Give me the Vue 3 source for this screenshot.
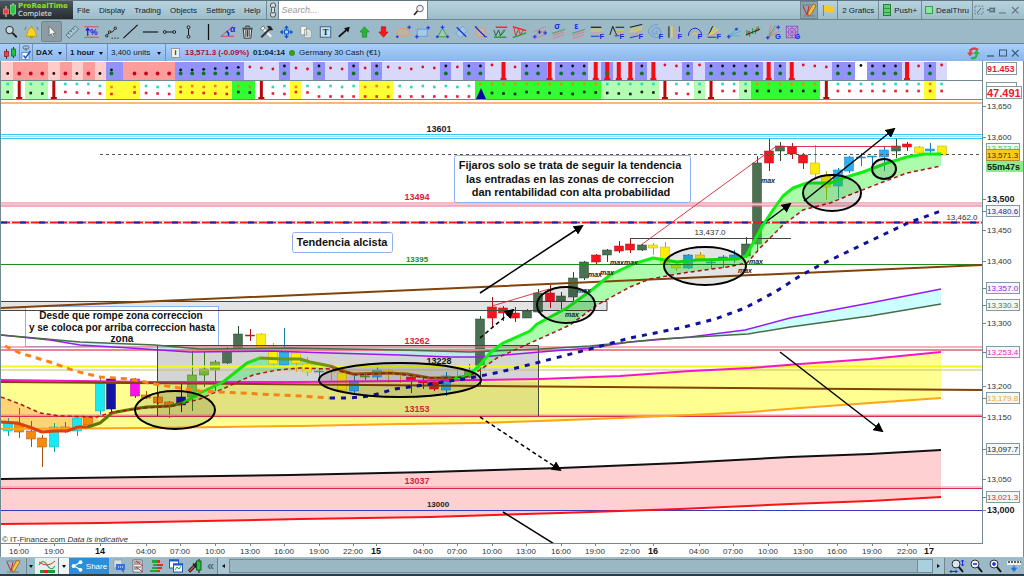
<script setup>
import { ref } from 'vue'

const STEP = 11.53
const cx = (i) => 7.7 + STEP * i
const pts = (list) => list.map((p) => p.join(',')).join(' ')

const query = ref('')
const menus = ['File', 'Display', 'Trading', 'Objects', 'Settings', 'Help']

const tools = [
  ['Zoom', '<circle cx="8" cy="8" r="3.8" fill="#c9dce4" stroke="#333" stroke-width="1.2"/><path d="M11 11l4.500 4.500" stroke="#222" stroke-width="2"/>'],
  ['Alert', '<path d="M4 14.500c2-2 1.500-7.500 5.500-9V4h1v1.500C14.500 7 14 12.500 16 14.500z" fill="#fbd51c" stroke="#b98a00" stroke-width=".7"/><circle cx="10" cy="15.500" r="1.400" fill="#c79208"/><path d="M4.500 4.500Q3 6 3.200 8M15.500 4.500Q17 6 16.800 8" fill="none" stroke="#555" stroke-width=".7"/>'],
  ['Select', '<path d="M7.500 4v10l2.300-2.200 1.600 4 1.700-.8-1.700-3.700h3z" fill="#fff" stroke="#566" stroke-width=".8"/>'],
  ['Ruler', '<path d="M3 13L13 3.500l3.500 3.500L6.500 16.500z" fill="#a7c5d2" stroke="#557682"/><path d="M5.500 11l1.500 1.500M8 8.700l1.500 1.500M10.500 6.300l1.500 1.500" stroke="#345"/>'],
  ['Variation', '<path d="M2.500 4.500h15M2.500 15.500h15" stroke="#e24b55" stroke-width="1.200"/><path d="M6 14V7M4 8.500l2-2.500 2 2.500" stroke="#1828e0" stroke-width="1.400" fill="none"/><text x="8.500" y="13.500" font-size="9" font-weight="700" fill="#1828e0">%</text>'],
  ['Polyline', '<path d="M5 14l3-4h3l3-4" stroke="#222" fill="none"/><g fill="#9bbac7" stroke="#222"><circle cx="5" cy="14" r="1.300"/><circle cx="8" cy="10" r="1.300"/><circle cx="14" cy="6" r="1.300"/></g><path d="M10 16.500h8" stroke="#222" stroke-dasharray="1.500 1.500"/>'],
  ['Segment', '<path d="M2.500 16.500L17.500 2.500" stroke="#111" stroke-width="1.200"/>'],
  ['Horizontal line', '<path d="M2 10h16" stroke="#111" stroke-width="1.200"/>'],
  ['Horizontal segment', '<path d="M6 10h8" stroke="#111"/><g fill="#b9d0da" stroke="#111"><circle cx="5" cy="10" r="1.500"/><circle cx="15" cy="10" r="1.500"/></g>'],
  ['Vertical segment', '<path d="M10 6v8" stroke="#111"/><g fill="#b9d0da" stroke="#111"><circle cx="10" cy="5" r="1.500"/><circle cx="10" cy="15" r="1.500"/></g>'],
  ['Vertical line', '<path d="M10 1.500v17" stroke="#111" stroke-width="1.300"/>'],
  ['Angle', '<path d="M16 4L3 14.500h14" stroke="#e0404c" fill="none"/><path d="M9 9q3 2 2 5" stroke="#1828e0" fill="none" stroke-width="1.500"/><text x="12.500" y="10" font-size="9" font-weight="700" fill="#1828e0">α</text>'],
  ['Delete', '<path d="M5.500 7h9l-1 9.500h-7z" fill="#ddd" stroke="#333"/><path d="M4.500 6h11M8 5V3.800h4V5M8.300 8v7M10 8v7M11.700 8v7" stroke="#333" fill="none"/>'],
  ['Tools', '<path d="M6 6l9 9" stroke="#eee" stroke-width="2.600"/><path d="M14 6L4.500 15.500" stroke="#333" stroke-width="2.200"/><path d="M10.500 3.500l4 .500 2.500 4-3.500.500z" fill="#222"/><path d="M3.500 6.500l3-3 2 2.500-2.500 2.500z" fill="#eee" stroke="#444" stroke-width=".7"/>'],
  ['Move', '<path d="M10 4v12M4 10h12" stroke="#1255c8" stroke-width="1.200"/><path d="M10 3l-2.500 3h5zM10 17l-2.500-3h5zM3 10l3-2.500v5zM17 10l-3-2.500v5z" fill="#1255c8"/><rect x="8" y="8" width="4" height="4" fill="#bcdff5" stroke="#1255c8"/>'],
  ['Copy', '<path d="M5 4h6v9H5zM9 7h4.500l2.500 2.500V16H9z" fill="#f4f4f0" stroke="#8a9499" stroke-width=".8"/><path d="M10.500 10h4M10.500 12h4M10.500 14h4" stroke="#999" stroke-width=".6"/>'],
  ['Text', '<rect x="4.500" y="4.500" width="11" height="11" fill="#c9e2ee" stroke="#406080"/><text x="7" y="13.500" font-size="9" font-weight="700" fill="#10204a" font-family="Liberation Serif">T</text>'],
  ['Arrow', '<path d="M4 15l9-8" stroke="#111" stroke-width="1.800"/><path d="M15.500 4.500l-1.500 6-4.500-4.500z" fill="#111"/>'],
  ['Up arrow', '<path d="M10 4.500l4.800 5.500h-2.500v5.500H7.700V10H5.200z" fill="#25b532" stroke="#128020" stroke-width=".6"/>'],
  ['Down arrow', '<path d="M10 15.500l4.800-5.500h-2.500V4.500H7.700V10H5.200z" fill="#f81616" stroke="#b00" stroke-width=".6"/>'],
  ['Ellipse', '<ellipse cx="9.500" cy="10.500" rx="6.500" ry="4" fill="#b7b5ae" stroke="#ee9a66" stroke-width="1.200"/><path d="M14 5h4M16 3v4M2 15h3M3.500 13.500v3" stroke="#1828e0"/>'],
  ['Rectangle', '<rect x="4.500" y="7" width="10.500" height="7.500" fill="#a6cbe3" stroke="#669be8"/><path d="M14 5.500h4M16 3.500v4M2 15h4M4 13v4" stroke="#1828e0"/>'],
  ['Triangle', '<path d="M10 6L5 15h10z" fill="#9fcaba" stroke="#3da04c"/><path d="M8 5h4M10 3v4M3 15h3M4.500 13.500v3M14 15h3M15.500 13.500v3" stroke="#1828e0"/>'],
  ['Parallelogram', '<path d="M11 4l5 4.500-7 7.500-5-4.500z" fill="#a6c7de" stroke="#72a3ea"/><path d="M5 5l10 10" stroke="#1828e0" stroke-width="1.200"/>'],
  ['Circle', '<circle cx="10" cy="10" r="5" fill="#b6b9b4" stroke="#ee9a66" stroke-width="1.200"/><path d="M5 5l10 10" stroke="#1828e0" stroke-width="1.200"/><path d="M4 4.500h2M14 15h3" stroke="#1828e0"/>'],
  ['Double top', '<path d="M5 5h12" stroke="#f22" stroke-width="1.500"/><path d="M3 15.500h13" stroke="#16a52a" stroke-width="1.500"/><path d="M3 8l2 6 3-6 2 6 5-6" stroke="#333" fill="none" stroke-width=".8"/><path d="M9 14l5-7" stroke="#16a52a"/>'],
  ['Wedge', '<path d="M3 4.500l14 4" stroke="#f22" stroke-width="1.500"/><path d="M3 16l14-5" stroke="#16a52a" stroke-width="1.500"/><path d="M4 5l2 9 3-7 2 6 3-5" stroke="#d33" fill="none"/>'],
  ['Pitchfork', '<path d="M3 10L17 4M4 14l13-6M5 17l12-5" stroke="#db7c85" stroke-width=".9"/><path d="M3 15h4M5 13v4M8 10h4M10 8v4M14 11h4M16 9v4" stroke="#1828e0"/>'],
  ['Standard deviation', '<path d="M4 12l12-4M4 14l12-4M4 17l12-4" stroke="#e47782" stroke-width=".9"/><path d="M3 11.500L17 7" stroke="#43ad5c"/><text x="5.500" y="7" font-size="9" font-weight="700" fill="#1828e0">σ</text>'],
  ['Standard error', '<path d="M4 12l12-4M4 14l12-4M4 17l12-4" stroke="#e47782" stroke-width=".9"/><path d="M3 11.500L17 7" stroke="#43ad5c"/><text x="5.500" y="7" font-size="9" font-weight="700" fill="#1828e0">ε</text>'],
  ['Fibonacci retracement', '<path d="M3 5h11" stroke="#111" stroke-width="1.200"/><path d="M3 7h11M3 9h11" stroke="#d7cd56"/><path d="M3 11h11" stroke="#e09a8c"/><path d="M3 14.500h9" stroke="#1828e0"/><text x="12" y="17" font-size="8" font-weight="700" fill="#1828e0">F</text>'],
  ['Fibonacci extension', '<path d="M2 13l3-9 4 9" stroke="#111" fill="none"/><path d="M8 5h9" stroke="#111"/><path d="M8 8h9" stroke="#d7cd56"/><path d="M8 10.500h9" stroke="#e09a8c"/><path d="M7 14h5" stroke="#1828e0"/><text x="12" y="17" font-size="8" font-weight="700" fill="#1828e0">F</text>'],
  ['Fibonacci channel', '<path d="M3 5l13-3" stroke="#111"/><path d="M3 8l13-3M3 10l13-3" stroke="#d7cd56" stroke-width="1.500"/><path d="M3 13l13-3" stroke="#e09a8c"/><path d="M3 16l9-2" stroke="#1828e0"/><text x="12" y="17" font-size="8" font-weight="700" fill="#1828e0">F</text>'],
  ['Fibonacci spiral', '<path d="M9 10q1-2 2 0t-3 2-2-4 6-2 2 7-9 1-1-9 8-2" stroke="#5896e0" fill="none" stroke-width=".9"/><text x="12" y="17" font-size="8" font-weight="700" fill="#1828e0">F</text>'],
  ['Fibonacci time zones', '<path d="M3 4v12" stroke="#444" stroke-width="1.500"/><path d="M6 4v12" stroke="#ddd056" stroke-width="2"/><path d="M10 4v12" stroke="#d4a29a" stroke-width="2"/><path d="M14 4v6" stroke="#1828e0"/><text x="12" y="17" font-size="8" font-weight="700" fill="#1828e0">F</text>'],
  ['Fibonacci arcs', '<path d="M2.500 14a7 8 0 0 1 14 0" stroke="#1828e0" fill="none"/><path d="M5 14a4.500 5 0 0 1 9 0" stroke="#e3a06a" fill="none"/><path d="M7 14a2.500 3 0 0 1 5 0" stroke="#ddd056" fill="none"/><text x="12" y="17" font-size="8" font-weight="700" fill="#1828e0">F</text>'],
  ['Fibonacci fan', '<path d="M3 15L8 4" stroke="#111"/><path d="M3 15l8-10M3 15l11-8" stroke="#ddd056" stroke-width="1.500"/><path d="M3 15l12-5" stroke="#e09a8c"/><path d="M3 15.500h9" stroke="#1828e0"/><text x="12" y="17" font-size="8" font-weight="700" fill="#1828e0">F</text>'],
  ['Speed lines', '<path d="M4 14l10-9M4 14l13-5M4 14h12" stroke="#5ba9ea"/><path d="M2 15h4M4 13v4" stroke="#1828e0"/><circle cx="12" cy="7" r="1.500" fill="#1255c8"/>'],
  ['Regression', '<path d="M3 14V8M6 15V9M9 12V6M12 12V7M15 9V4" stroke="#2da043" stroke-width="1.300"/><path d="M4.500 13V9M13.500 10V5" stroke="#d33"/><path d="M2 13l15-6" stroke="#222"/>'],
  ['Gann fan', '<path d="M5 15L7 3M5 15l9-10M5 15l12-6" stroke="#dc7893"/><path d="M5 15l7-12" stroke="#43ad5c"/><path d="M2 16h4M4 14v4M13 5h4M15 3v4" stroke="#1828e0"/><text x="11.500" y="17" font-size="8" font-weight="700" fill="#1828e0">G</text>'],
  ['Gann square', '<rect x="3.500" y="4" width="12" height="12" fill="#c6a9df" stroke="#8c4ec5"/><path d="M3.500 4l12 12M15.500 4l-12 12M9.500 4v12M3.500 10h12" stroke="#8c4ec5" stroke-width=".7"/><circle cx="9.500" cy="10" r="4" fill="none" stroke="#8c4ec5"/><text x="12" y="17" font-size="8" font-weight="700" fill="#1828e0">G</text>']
]

/* indicator strips: [colour, right edge] */
const C = { l: '#ffcccc', p: '#fb9d9d', b: '#9292fa', v: '#d8d8fb', w: '#ffffff', g: '#b4fbb4', G: '#33fb33', y: '#ffff33' }
const runs = (list) => {
  let x = 1
  return list.map(([c, end]) => {
    const r = { x, w: end - x, fill: C[c], c, end }
    x = end
    return r
  })
}
const bandA = runs([
  ['l', 13], ['p', 48], ['l', 60], ['p', 72], ['l', 83], ['p', 95], ['l', 106], ['b', 123], ['p', 175], ['b', 244], ['v', 279], ['b', 290],
  ['v', 313], ['b', 325], ['v', 348], ['b', 359], ['v', 371], ['b', 382], ['v', 440], ['b', 451], ['v', 463], ['b', 485], ['v', 521],
  ['b', 547], ['v', 555], ['b', 588], ['v', 601], ['b', 613], ['v', 635], ['b', 647], ['v', 682], ['b', 693], ['v', 705], ['b', 763],
  ['v', 774], ['b', 786], ['v', 832], ['b', 855], ['w', 867], ['b', 902], ['v', 924], ['b', 936], ['v', 947]
])
const bandB = runs([
  ['g', 13], ['w', 25], ['g', 48], ['w', 106], ['y', 140], ['w', 175], ['y', 232], ['G', 255], ['w', 290], ['y', 301], ['w', 359], ['y', 393],
  ['w', 475], ['G', 601], ['g', 659], ['w', 694], ['g', 705], ['w', 739], ['g', 751], ['G', 820], ['w', 924], ['y', 936], ['w', 947]
])
const flagsA = [43, 47, 51, 52, 53, 54, 56, 66, 68, 78]
const flagsB = [1, 4, 22, 57, 61, 71]
const at = (band, x) => (band.find((r) => x < r.end) || {}).c
const dotsA = []
const dotsB = []
for (let i = 0; i < 82; i++) {
  if (i === 10) continue
  const x = cx(i)
  const a = at(bandA, x)
  if (a === 'b') {
    const y = i < 16 ? 70 : i < 22 ? 70 - (i - 16) / 1.5 : 66
    dotsA.push({ x, y, c: '#111122', r: 1.4 }, { x, y: 73.4, c: '#087818', r: 1.9 })
  } else if (a === 'w') dotsA.push({ x, y: 65.5, c: '#111', r: 1.4 })
  else if (a === 'l') dotsA.push({ x, y: 73.5, c: '#111', r: 1.4 })
  else if (a === 'p') dotsA.push({ x, y: 73.5, c: '#c80018', r: 1.9 })
  else if (!flagsA.includes(i)) dotsA.push({ x, y: i > 40 ? 65 + (i % 3) : 67 + (i % 3), c: '#d8142c', r: 1.4 })
  const b = at(bandB, x)
  if (!flagsB.includes(i)) {
    dotsB.push({ x, y: i < 8 || i > 40 ? 84 : 86 + (i % 2), c: 'yG'.includes(b) ? '#f28020' : '#28d8c4' })
    dotsB.push({ x, y: i > 26 && i < 42 ? 96.500 : i > 60 ? 91 : 92 + (i % 5) / 2, c: 'gG'.includes(b) ? '#102810' : '#f01c2c' })
  }
}

/* candles: index, colour, body top, body bottom, wick top, wick bottom */
const K = { c: '#18eaf4', o: '#f58a0c', n: '#1414a4', m: '#ff10f0', e: '#7ab53c', d: '#4c7152', y: '#fbee08', s: '#2bb0f2', r: '#fa1420' }
const W = { c: '#10a0a8', o: '#a85010', n: '#101070', m: '#b000a0', e: '#3f7a22', d: '#2a4a30', y: '#c8a800', s: '#187ab8', r: '#b01018' }
const candles = [
  [0, 'c', 423, 431, 418, 436], [1, 'o', 424, 432, 408, 438], [2, 'o', 431, 439, 421, 447], [3, 'o', 438, 447, 435, 467], [4, 'c', 427, 447, 423, 452],
  [5, 'o', 427, 430, 422, 433], [6, 'c', 418, 431, 417, 436], [7, 'o', 417, 425, 416, 427], [8, 'c', 383, 411, 377, 415], [9, 'n', 379, 409, 378, 413],
  [11, 'm', 379, 396, 378, 398], [12, 'o', 395, 398, 391, 399], [13, 'o', 397, 403, 393, 404], [14, 'o', 402, 406, 401, 418], [15, 'n', 397, 405, 384, 412],
  [16, 'e', 375, 397, 348, 411], [17, 'e', 369, 375, 352, 387], [18, 'e', 362, 370, 360, 391], [19, 'd', 350, 363, 347, 364], [20, 'd', 334, 350, 326, 351],
  [21, 'r', 335, 336, 329, 341], [22, 'y', 334, 347, 333, 350], [23, 'y', 347, 364, 343, 367], [24, 's', 352, 365, 328, 366], [25, 'y', 353, 363, 348, 372],
  [26, 'y', 364, 372, 357, 376], [27, 's', 371, 372, 368, 377], [28, 'y', 371, 372, 370, 382], [29, 'y', 373, 390, 372, 391], [30, 's', 381, 391, 376, 393],
  [31, 'e', 376, 377, 373, 380], [32, 's', 370, 377, 366, 380], [33, 'y', 370, 374, 369, 383], [34, 'y', 374, 375, 373, 383], [35, 'r', 377, 381, 377, 393],
  [36, 'r', 381, 383, 377, 389], [37, 'r', 382, 389, 381, 391], [38, 's', 376, 390, 372, 396], [39, 'y', 377, 378, 369, 380], [40, 'e', 370, 377, 364, 378],
  [41, 'd', 319, 368, 316, 387], [42, 'r', 307, 318, 297, 327], [43, 'r', 308, 313, 306, 321], [44, 'r', 313, 318, 307, 322], [45, 'd', 311, 318, 309, 318],
  [46, 'd', 293, 312, 289, 313], [47, 'r', 293, 301, 285, 308], [48, 'd', 296, 301, 292, 309], [49, 'd', 278, 297, 272, 304], [50, 'd', 262, 278, 261, 280],
  [51, 'r', 255, 262, 254, 264], [52, 'd', 250, 255, 249, 262], [53, 'r', 246, 251, 241, 253], [54, 'r', 244, 250, 238, 253], [55, 'd', 245, 250, 244, 251],
  [56, 'y', 245, 248, 243, 255], [57, 'y', 247, 264, 242, 265], [58, 'y', 265, 268, 263, 271], [59, 's', 255, 268, 254, 269], [60, 'y', 255, 259, 252, 260],
  [61, 's', 262, 263, 260, 269], [62, 's', 257, 258, 255, 268], [63, 's', 255, 259, 250, 263], [64, 'd', 244, 256, 237, 258], [65, 'd', 163, 244, 156, 252],
  [66, 'r', 151, 163, 138, 171], [67, 'd', 146, 151, 142, 161], [68, 'r', 147, 154, 143, 159], [69, 'r', 155, 163, 153, 169], [70, 'y', 163, 174, 145, 177],
  [71, 'y', 176, 187, 171, 200], [72, 's', 170, 186, 168, 198], [73, 's', 157, 171, 156, 173], [74, 's', 157, 158, 153, 166], [75, 's', 156, 157, 156, 165],
  [76, 's', 150, 157, 147, 171], [77, 'd', 146, 151, 139, 158], [78, 'r', 144, 147, 142, 151], [79, 'y', 147, 153, 146, 154], [80, 's', 149, 151, 143, 154], [81, 'y', 146, 155, 146, 155]
].map(([i, k, t, b, wt, wb]) => ({ x: Math.round(cx(i)), t, h: b - t, wt, wb, fill: K[k], line: W[k] }))

const fast = [[1, 422], [17, 423], [32, 428], [42, 432], [55, 431], [67, 431], [78, 427], [88, 427], [100, 423], [112, 413], [122, 411], [133, 409], [147, 407],
  [170, 406], [183, 403], [200, 393], [223, 382], [247, 363], [260, 358], [283, 359], [300, 359], [310, 362], [330, 366], [340, 370], [353, 374], [390, 373],
  [407, 374], [430, 378], [453, 378], [467, 376], [477, 368], [490, 353], [503, 343], [530, 331], [537, 324], [567, 308], [593, 289], [610, 275], [633, 264],
  [653, 258], [677, 262], [697, 260], [737, 259], [746, 256], [763, 225], [773, 210], [783, 196], [793, 188], [807, 183], [830, 183], [843, 178], [863, 172],
  [887, 163], [907, 157], [925, 154], [941, 154]]
const slow = [[1, 397], [20, 404], [40, 413], [60, 416], [97, 417], [113, 412], [143, 408], [173, 406], [200, 399], [227, 387], [253, 375], [277, 370], [300, 368],
  [330, 369], [357, 375], [390, 373], [430, 378], [467, 377], [480, 370], [497, 358], [537, 340], [570, 325], [597, 305], [630, 287], [650, 279], [683, 273],
  [727, 267], [747, 263], [760, 248], [783, 225], [803, 210], [830, 203], [857, 192], [883, 182], [907, 173], [941, 166]]
const between = (a, b, from, to) => {
  const inside = (l) => l.filter(([x]) => x >= from && x <= to)
  return pts([...inside(a), ...inside(b).reverse()])
}
const part = (l, from, to) => pts(l.filter(([x]) => x >= from && x <= to))
const fastParts = [
  ['#dc4010', part(fast, 1, 88)], ['#5f7800', part(fast, 88, 183)], ['#1ede0c', part(fast, 183, 260)], ['#6f9610', part(fast, 260, 330)],
  ['#9c6410', part(fast, 330, 453)], ['#10f010', part(fast, 453, 941)]
]
const purple = [[1, 335], [50, 340], [80, 345], [130, 348], [190, 352], [270, 351], [330, 353], [400, 355], [450, 357], [480, 357], [540, 352], [590, 348], [630, 342], [690, 337], [745, 330], [790, 318], [870, 303], [941, 289]]
const forest = [[1, 335], [80, 342], [155, 345], [200, 349], [290, 348], [400, 350], [470, 352], [540, 349], [590, 346], [660, 339], [748, 334], [790, 327], [870, 316], [941, 304]]
const magenta = [[1, 380], [80, 381], [150, 382], [300, 382], [400, 381], [480, 380], [540, 379], [620, 376], [690, 371], [750, 368], [800, 364], [870, 359], [941, 352]]
const amber = [[1, 429], [150, 428], [300, 426], [400, 424], [480, 423], [540, 421], [620, 418], [690, 415], [750, 412], [800, 408], [870, 403], [941, 398]]
const upper = [[1, 479], [145, 477], [290, 475], [430, 472], [560, 468], [680, 463], [790, 457], [870, 454], [941, 450]]
const lower = [[1, 524], [100, 523], [300, 519], [430, 517], [560, 513], [680, 509], [790, 504], [870, 501], [941, 497]]
const navy = [[330, 398], [350, 398], [370, 396], [395, 389], [430, 384], [470, 378], [500, 372], [540, 362], [590, 349], [630, 338], [680, 328], [715, 319], [745, 308], [775, 292], [800, 276], [822, 264], [870, 241], [910, 222], [941, 211]]
const orange = [[5, 346], [20, 353], [50, 362], [75, 371], [100, 377], [130, 379], [160, 385], [200, 391], [240, 393], [300, 396], [330, 398]]

const levels = [
  [103, '#ffb67a', 2], [134.5, '#38c8f8', 1], [136.5, '#a0e8ff', 1], [138.5, '#38c8f8', 1], [203, '#e0708c', 1], [204.5, '#ffc4d0', 2], [206, '#e0708c', 1],
  [264.5, '#1c8c1c', 1], [347, '#ea6478', 1], [350, '#ea8490', 2], [366.5, '#f4f420', 2], [370, '#c8c060', 1],
  [415.5, '#f0909c', 2], [416.500, '#d8304c', 1], [487, '#f0909c', 1], [488.500, '#dc2850', 1], [510.500, '#3838c0', 1]
]
const ellipses = [[175, 410, 40, 19], [400, 380, 81, 17], [566, 305, 29, 18], [705, 266, 41, 19], [832, 193, 29, 18], [884, 169, 12, 10]]
const arrows = [[480, 293, 582, 226], [767, 221, 790, 204], [804, 201, 894, 129], [780, 352, 882, 431], [503, 512, 575, 557]]
const dashedArrows = [[480, 338, 513, 310], [480, 417, 560, 470]]
const maxTags = [[768, 183], [756, 264], [745, 273], [617, 265], [631, 265], [595, 277], [607, 275], [584, 293], [572, 317]]
const levelTags = [[439, 132, '13601', '#222'], [417, 200, '13494', '#d81c3c'], [417, 344, '13262', '#d81c3c'], [439, 364, '13228', '#111'], [417, 412, '13153', '#d81c3c'], [417, 484, '13037', '#d81c3c']]

const ticks = [[106, '13,650'], [137, '13,600'], [230, '13,450'], [261, '13,400'], [323, '13,300'], [386, '13,200'], [417, '13,150'], [479, '13,050']]
const boldTicks = [[199, '13,500'], [510, '13,000']]
const boxes = [[211, '13,480.6', '#2828a0'], [288, '13,357.0', '#9418e8'], [305, '13,330.3', '#4c7850'], [352, '13,253.4', '#f418c8'], [398, '13,179.8', '#f8a428'], [449, '13,097.7', '#222222'], [497, '13,021.3', '#f02430']]

const times = [[19, '16:00'], [54, '19:00'], [100, '14', 1], [146, '04:00'], [180, '07:00'], [215, '10:00'], [250, '13:00'], [284, '16:00'], [319, '19:00'], [353, '22:00'],
  [376, '15', 1], [423, '04:00'], [457, '07:00'], [492, '10:00'], [526, '13:00'], [561, '16:00'], [595, '19:00'], [630, '22:00'], [653, '16', 1], [699, '04:00'],
  [733, '07:00'], [768, '10:00'], [803, '13:00'], [837, '16:00'], [872, '19:00'], [907, '22:00'], [929, '17', 1]]
</script>

<template>
  <main class="app">
    <header class="top">
      <div class="brand">
        <svg viewBox="0 0 16 18" width="16" height="18" aria-hidden="true">
          <path d="M4 5v11M11 2v13" stroke="#ddd" />
          <rect x="1.500" y="8" width="5" height="5" fill="#f03c3c" stroke="#ffa0a0" stroke-width=".6" />
          <rect x="8.500" y="4" width="5" height="9" fill="#28c840" stroke="#a0ffa0" stroke-width=".6" />
        </svg>
        <div class="brand-text"><b>ProRealTime</b><span>Complete</span></div>
      </div>
      <nav class="menus"><button v-for="m in menus" :key="m">{{ m }}</button></nav>
      <button class="link-btn" aria-label="Link windows">
        <svg viewBox="0 0 10 16" width="10" height="16"><g fill="#d4dde0" stroke="#555" stroke-width="1"><rect x="2.500" y="1" width="5" height="5" rx="2" /><rect x="2.500" y="10" width="5" height="5" rx="2" /><rect x="3.500" y="5" width="3" height="6" rx="1.500" /></g></svg>
      </button>
      <label class="search">
        <input v-model="query" type="text" placeholder="Search..." aria-label="Search" />
        <svg viewBox="0 0 12 12" width="12" height="12"><circle cx="7" cy="4.500" r="3.300" fill="#eef" stroke="#666" /><path d="M4.500 7L1 11" stroke="#222" stroke-width="1.600" /></svg>
      </label>
      <div class="top-right">
        <button class="draw-btn" aria-label="Draw">
          <svg viewBox="0 0 16 16" width="16" height="16"><path d="M1 3h13M2 14h12" stroke="#667" stroke-width=".7" /><path d="M2 4l4 9 2-9" stroke="#d02020" fill="none" /><path d="M12 2L7 11l.5 3 2.500-1.500 5-9z" fill="#ffc038" stroke="#7a5010" stroke-width=".6" /></svg>
        </button>
        <button aria-label="Flag"><svg viewBox="0 0 14 14" width="14" height="14"><path d="M2.500 2v11" stroke="#b88000" /><path d="M3 3q3-1.500 5 0t5 0v6q-3 1.500-5 0t-5 0z" fill="#ffc81c" /></svg></button>
        <button class="ruled">2 Grafics</button>
        <button class="ruled"><i class="stack"></i>Push+</button>
        <button class="ruled"><i class="square"></i>DealThru</button>
        <button class="win" aria-label="Configure"><svg viewBox="0 0 10 10" width="10" height="10"><rect x="1" y="1" width="8" height="8" fill="none" stroke="#6f858e" stroke-dasharray="2 1.300" /><path d="M3 8l4-5" stroke="#566" /></svg></button>
        <button class="win" aria-label="Pin"><svg viewBox="0 0 10 10" width="10" height="10"><path d="M1 5h3M4 2.500v5M4 3.500h4v3H4M8.500 2.500v5" stroke="#5d727b" fill="none" stroke-width="1.300" /></svg></button>
        <button class="win" aria-label="Minimize"><svg viewBox="0 0 10 10" width="10" height="10"><path d="M1 8h7" stroke="#6b808a" stroke-width="1.300" /></svg></button>
        <button class="win" aria-label="Close"><svg viewBox="0 0 10 10" width="10" height="10"><path d="M2 2l6.500 6.500M8.500 2L2 8.500" stroke="#6b808a" stroke-width="1.300" /></svg></button>
      </div>
    </header>

    <div class="toolbar" role="toolbar">
      <button v-for="(t, i) in tools" :key="t[0]" :class="{ pressed: i === 2 }" :aria-label="t[0]">
        <svg viewBox="0 0 20 20" width="19" height="20" v-html="t[1]"></svg>
      </button>
    </div>

    <div class="title">
      <button class="cell candle-cell" aria-label="Chart style">
        <svg viewBox="0 0 14 14" width="14" height="14"><path d="M3.500 3v10M10.500 1v11" stroke="#333" /><rect x="1.500" y="5.500" width="4" height="5" fill="#f04048" stroke="#901818" stroke-width=".7" /><rect x="8.500" y="3" width="4" height="7" fill="#20c038" stroke="#106818" stroke-width=".7" /></svg>
      </button>
      <button class="cell check-cell" aria-label="Linked">
        <svg viewBox="0 0 12 16" width="12" height="16"><rect x="3" y="1" width="6" height="3" rx="1.500" fill="none" stroke="#667" /><path d="M6 3v3" stroke="#667" /><rect x="2" y="7.500" width="7" height="7" fill="#fff" stroke="#4a80c0" stroke-width=".8" /><path d="M3.500 10.500l2 2.500 5-7" fill="none" stroke="#1858c8" stroke-width="1.500" /></svg>
      </button>
      <label class="cell pick dax"><select aria-label="Instrument"><option>DAX</option></select></label>
      <label class="cell pick hour"><select aria-label="Timeframe"><option>1 hour</option></select></label>
      <label class="cell pick units"><select aria-label="History"><option>3,400 units</option></select></label>
      <button class="info" aria-label="Information">i</button>
      <b class="quote">13,571.3 (-0.09%)</b>
      <b class="clock">01:04:14</b>
      <i class="live"></i>
      <span class="name">Germany 30 Cash (€1)</span>
      <div class="title-right">
        <button aria-label="Refresh"><svg viewBox="0 0 14 14" width="14" height="14"><path d="M12 4Q8 1 4.500 4v4" fill="none" stroke="#e83c44" stroke-width="2.300" /><path d="M1 6.500h6.500L4 10.500z" fill="#e83c44" /><path d="M5 12q4 1 5.500-2V7" fill="none" stroke="#28b838" stroke-width="2.300" /><path d="M7 8l3.500-4L14 8z" fill="#28b838" /></svg></button>
        <button aria-label="Minimize chart"><svg viewBox="0 0 10 10" width="10" height="10"><path d="M1 8h7" stroke="#365878" stroke-width="1.300" /></svg></button>
        <button aria-label="Maximize chart"><svg viewBox="0 0 10 10" width="10" height="10"><rect x="1.500" y="2" width="7" height="6" fill="none" stroke="#365878" /></svg></button>
        <button aria-label="Close chart"><svg viewBox="0 0 10 10" width="10" height="10"><path d="M2 2l6.500 6.500M8.500 2L2 8.500" stroke="#365878" stroke-width="1.200" /></svg></button>
      </div>
    </div>

    <section class="workspace">
      <div class="plots">
        <svg class="panel" viewBox="0 61 982 20">
          <rect v-for="(r, i) in bandA" :key="i" :x="r.x" y="62" :width="r.w" height="18" :fill="r.fill" />
          <circle v-for="(d, i) in dotsA" :key="'d' + i" :cx="d.x" :cy="d.y" :r="d.r" :fill="d.c" />
          <path v-for="i in flagsA" :key="'f' + i" :d="`M${cx(i) - 2} 62h4v16h1v2h-6v-2h1z`" fill="#f80c14" />
          <circle :cx="cx(52)" cy="73.500" r="1.800" fill="#4a6800" />
          <path d="M0 80.500H982M.5 61V81" stroke="#71898f" />
        </svg>
        <svg class="panel" viewBox="0 81 982 19">
          <rect v-for="(r, i) in bandB" :key="i" :x="r.x" y="81" :width="r.w" height="18" :fill="r.fill" />
          <rect v-for="(d, i) in dotsB" :key="'d' + i" :x="d.x - 1.300" :y="d.y - 1.300" width="2.600" height="2.600" :fill="d.c" />
          <path v-for="i in flagsB" :key="'f' + i" :d="`M${cx(i) - 1.500} 81h3v16h1.500v2h-6v-2h1.500z`" fill="#b80808" />
          <path d="M476 99l5-11 5 11z" fill="#0808a0" />
          <path d="M0 99.500H982M.5 81V100" stroke="#71898f" />
        </svg>
        <svg class="panel" viewBox="0 100 982 444">
          <defs>
            <marker id="head" viewBox="0 0 10 10" refX="8" refY="5" markerWidth="10" markerHeight="10" markerUnits="userSpaceOnUse" orient="auto"><path d="M0 0l10 5-10 5z" fill="#000" /></marker>
          </defs>
          <rect x="1" y="301" width="606" height="10" fill="#e4e4e4" />
          <rect x="25.500" y="306.500" width="193" height="40" fill="#fff" stroke="#8cb0f8" />
          <rect x="157.500" y="345.500" width="381" height="70" fill="#d4d4d4" />
          <polygon :points="between(upper, lower, 1, 941)" fill="#ffd0d2" />
          <polygon :points="between(magenta, amber, 1, 941)" fill="#ffff66" fill-opacity=".72" />
          <rect x="157.500" y="382" width="381" height="34" fill="#808060" fill-opacity=".14" />
          <polygon :points="between(purple, forest, 1, 330)" fill="#c8f8f4" fill-opacity=".8" />
          <polygon :points="between(purple, forest, 330, 540)" fill="#b8eeee" fill-opacity=".8" />
          <polygon :points="between(purple, forest, 540, 941)" fill="#ccffff" />
          <polygon :points="between(fast, slow, 1, 100)" fill="#ffb060" fill-opacity=".55" />
          <polygon :points="between(fast, slow, 173, 330)" fill="#38f068" fill-opacity=".42" />
          <g v-for="(k, i) in candles" :key="'c' + i">
            <path :d="`M${k.x + .5} ${k.wt}V${k.wb}`" :stroke="k.line" />
            <rect :x="k.x - 4.500" :y="k.t" width="9" :height="k.h" :fill="k.fill" :stroke="k.line" stroke-width=".5" />
          </g>
          <polygon :points="between(fast, slow, 453, 941)" fill="#38fa38" fill-opacity=".42" />
          <path v-for="(l, i) in levels" :key="'l' + i" :d="`M1 ${l[0]}H982`" :stroke="l[1]" :stroke-width="l[2]" />
          <path d="M100 154.500H982" stroke="#555" stroke-dasharray="3 3" />
          <path d="M1 222.500H982" stroke="#f01828" stroke-width="2" />
          <path d="M1 222.500H982" stroke="#2020b0" stroke-width="2" stroke-dasharray="6 13" />
          <path d="M1 222.500H982" stroke="#fff" stroke-width="2" stroke-dasharray="2 17" stroke-dashoffset="10" />
          <path d="M1 301.500H607V310.500H1" stroke="#444" fill="none" />
          <path d="M157.500 416V345.500H538.500V416" stroke="#444" fill="none" />
          <path d="M630 238.500H791" stroke="#444" />
          <path d="M492 306L549 289M641 245L776 146.500H900" stroke="#d42434" stroke-width=".9" fill="none" />
          <polyline :points="pts(purple)" stroke="#9c18f0" stroke-width="1.500" fill="none" />
          <polyline :points="pts(forest)" stroke="#476c48" stroke-width="1.500" fill="none" />
          <polyline :points="pts(magenta)" stroke="#f814c8" stroke-width="2" fill="none" />
          <polyline :points="pts(amber)" stroke="#ffa414" stroke-width="2" fill="none" />
          <polyline :points="pts(upper)" stroke="#111" stroke-width="2" fill="none" />
          <polyline :points="pts(lower)" stroke="#fa1418" stroke-width="2" fill="none" />
          <path d="M1 308L982 265M1 382L982 390" stroke="#814408" stroke-width="2" />
          <polyline v-for="(f, i) in fastParts" :key="'p' + i" :points="f[1]" :stroke="f[0]" stroke-width="3" stroke-linejoin="round" fill="none" />
          <polyline :points="pts(slow)" stroke="#b01418" stroke-width="1.500" stroke-dasharray="4 3" fill="none" />
          <polyline :points="pts(orange)" stroke="#fa8214" stroke-width="3" stroke-dasharray="6 5" fill="none" />
          <polyline :points="pts(navy)" stroke="#10109c" stroke-width="3" stroke-dasharray="5 6" fill="none" />
          <ellipse v-for="(e, i) in ellipses" :key="'e' + i" :cx="e[0]" :cy="e[1]" :rx="e[2]" :ry="e[3]" fill="#000" fill-opacity=".11" stroke="#000" stroke-width="2" />
          <path v-for="(a, i) in arrows" :key="'a' + i" :d="`M${a[0]} ${a[1]}L${a[2]} ${a[3]}`" stroke="#000" stroke-width="1.500" marker-end="url(#head)" />
          <path v-for="(a, i) in dashedArrows" :key="'b' + i" :d="`M${a[0]} ${a[1]}L${a[2]} ${a[3]}`" stroke="#000" stroke-width="1.500" stroke-dasharray="4 3" marker-end="url(#head)" />
          <text v-for="(m, i) in maxTags" :key="'m' + i" class="max" :x="m[0]" :y="m[1]">max</text>
          <text v-for="t in levelTags" :key="t[2]" class="level" :x="t[0]" :y="t[1]" :fill="t[3]">{{ t[2] }}</text>
          <text class="level-sm" x="417" y="262" fill="#1c8c1c">13395</text>
          <text class="level-sm" x="438" y="507" fill="#222">13000</text>
          <text class="tick mid" x="710" y="235">13,437.0</text>
          <text class="tick mid" x="962" y="220">13,462.0</text>
          <rect x="454.500" y="155.500" width="236" height="47" rx="2" fill="#fff" stroke="#8cb0f8" />
          <text class="note" x="570" y="169">Fijaros solo se trata de seguir la tendencia</text>
          <text class="note" x="570" y="183">las entradas en las zonas de correccion</text>
          <text class="note" x="571" y="196">dan rentabilidad con alta probabilidad</text>
          <rect x="292.500" y="232.500" width="100" height="20" rx="2" fill="#fff" stroke="#8cb0f8" />
          <text class="note" x="342" y="246">Tendencia alcista</text>
          <text class="note small" x="121" y="319">Desde que rompe zona correccion</text>
          <text class="note small" x="122" y="331">y se coloca por arriba correccion hasta</text>
          <text class="note small" x="122" y="342">zona</text>
          <text class="tick" x="2" y="541.500">© IT-Finance.com <tspan font-style="italic">Data is indicative</tspan></text>
          <path d="M0 543.500H982M.5 100V544" stroke="#71898f" />
        </svg>
        <svg class="panel" viewBox="0 544 982 13">
          <path d="M.5 544V557" stroke="#71898f" />
          <g v-for="(t, i) in times" :key="i">
            <path :d="`M${t[0] + .5} 544v2`" stroke="#71898f" />
            <text :class="t[2] ? 'day' : 'tick mid'" :x="t[0]" y="554">{{ t[1] }}</text>
          </g>
        </svg>
      </div>
      <svg class="prices" viewBox="982 61 42 496">
        <path d="M982.500 61V544" stroke="#71898f" />
        <path d="M1023.500 61V557" stroke="#71898f" />
        <path v-for="t in [...ticks, ...boldTicks, ...boxes]" :key="t[0]" :d="`M983 ${t[0] + .5}h3`" stroke="#71898f" />
        <text v-for="t in ticks" :key="t[1]" class="tick" x="987" :y="t[0] + 3">{{ t[1] }}</text>
        <text v-for="t in boldTicks" :key="t[1]" class="bold" x="987" :y="t[0] + 3">{{ t[1] }}</text>
        <g v-for="b in boxes" :key="b[1]">
          <rect x="986.500" :y="b[0] - 5.500" width="33" height="11" fill="#f4f7f7" stroke="#8599a0" />
          <text class="tick" x="987" :y="b[0] + 3" :style="{ fill: b[2] }">{{ b[1] }}</text>
        </g>
        <rect x="986.500" y="62.500" width="30" height="12" fill="#fff" stroke="#8599a0" />
        <text class="bold red" x="987" y="72">91.453</text>
        <rect x="986.500" y="82.500" width="30" height="12" fill="#fff" stroke="#8599a0" />
        <rect x="986.500" y="86.500" width="35" height="12" fill="#fff" stroke="#8599a0" />
        <text class="big" x="987" y="97">47.491</text>
        <rect x="986.500" y="143.500" width="33" height="11" fill="#f4f7f7" stroke="#8599a0" />
        <text class="tick" x="987" y="151" :style="{ fill: '#40d048' }">13,573.0</text>
        <rect x="986.500" y="149.500" width="33" height="11" fill="#ffc81c" stroke="#b09030" />
        <text class="tick" x="987" y="158">13,571.3</text>
        <rect x="986" y="161" width="37" height="11" fill="#8cec8c" />
        <text class="bold" x="987" y="170">55m47s</text>
      </svg>
    </section>

    <footer class="bottom">
      <button class="b-draw" aria-label="Drawing tools"><svg viewBox="0 0 16 16" width="16" height="16"><path d="M1 3h14M2 14h12" stroke="#667" stroke-width=".7" /><path d="M2 4l4 9 2-9" stroke="#d02020" fill="none" /><path d="M12 2L7 11l.5 3 2.500-1.500 5-9z" fill="#ffc038" stroke="#7a5010" stroke-width=".6" /></svg></button>
      <button class="drop" aria-label="Drawing options"></button>
      <button class="b-chart" aria-label="Indicators"><svg viewBox="0 0 18 16" width="18" height="16"><path d="M1 7q4-7 8 0t8 1" fill="none" stroke="#28a840" stroke-width="1.200" /><path d="M1 4q4 3 8 3t8-4" fill="none" stroke="#d04040" /><path d="M2 12h15v3H2z" fill="#1c9c30" /><path d="M6 12h4v3H6z" fill="#e02020" /></svg></button>
      <button class="drop light" aria-label="Indicator options"></button>
      <button class="share"><svg viewBox="0 0 12 12" width="12" height="12"><path d="M10 2L3 6l7 4" fill="none" stroke="#fff" stroke-width="1.300" /><g fill="#fff"><circle cx="9.500" cy="2.200" r="1.900" /><circle cx="2.500" cy="6" r="1.900" /><circle cx="9.500" cy="9.800" r="1.900" /></g></svg>Share</button>
      <button class="b-icon" aria-label="Chat"><svg viewBox="0 0 16 16" width="16" height="16"><path d="M3 2h8v7H5l-2 2z" fill="#d8dfe4" stroke="#8090a0" stroke-width=".6" /><path d="M5 6h9v6h-1v3l-3-3H5z" fill="#3c70d8" /><path d="M7 9h6" stroke="#fff" stroke-dasharray="1 1" /></svg></button>
      <button class="b-icon" aria-label="News"><svg viewBox="0 0 16 16" width="16" height="16"><path d="M3 2h9v12H3z" fill="#f4f4f4" stroke="#555" stroke-width=".7" /><path d="M4 4h7M4 6h6M4 9h7M4 11h4" stroke="#555" /><path d="M6 3l7 5M6 9l7 5" stroke="#c83030" /></svg></button>
      <button class="b-icon" aria-label="Order book"><svg viewBox="0 0 16 16" width="16" height="16"><path d="M3 2h5v3H3zM4 6h4v2H4zM3 9h5v2H3zM1 12h7v2H1z" fill="#20a838" /><path d="M8 2h3v3H8zM8 6h6v2H8zM8 9h5v2H8zM8 12h3v2H8z" fill="#f02828" /></svg></button>
      <button class="b-icon" aria-label="Windows"><svg viewBox="0 0 16 16" width="16" height="16"><rect x="1.500" y="2" width="9" height="8" fill="#fff" stroke="#2058c0" /><path d="M1 2.500h10" stroke="#2058c0" stroke-width="2" /><rect x="5.500" y="6" width="9" height="8" fill="#fff" stroke="#2058c0" /><path d="M5 6.500h10" stroke="#2058c0" stroke-width="2" /><path d="M7 12l2-3 2 2 2-3" fill="none" stroke="#28a840" /></svg></button>
      <button class="b-icon" aria-label="Chart settings"><svg viewBox="0 0 16 16" width="16" height="16"><path d="M12 1v14" stroke="#111" /><rect x="9.500" y="3" width="4.500" height="9" fill="#28c040" stroke="#106020" /><path d="M2 13.500l6-6" stroke="#222" stroke-width="3.200" /><path d="M2.500 13l5-5" stroke="#e04848" stroke-width="1.600" /><path d="M6 5.500l3 4M9 4.500L7.500 7l2.500.5" stroke="#222" stroke-width="1.300" fill="none" /></svg></button>
      <button class="fold" aria-label="Collapse">«</button>
      <div class="scroll">
        <button aria-label="Scroll left"><i class="left"></i></button>
        <div class="track"><div class="thumb"></div></div>
        <button aria-label="Scroll right"><i class="right"></i></button>
      </div>
      <div class="zooms">
        <button aria-label="Auto zoom"><svg viewBox="0 0 16 16" width="16" height="16"><circle cx="7" cy="6" r="4" fill="#d8e6ee" stroke="#333" /><path d="M10 9l4 5" stroke="#111" stroke-width="2" /><path d="M13.500 2v6M12 3.500L13.500 2 15 3.500M12 6.500L13.500 8 15 6.500M1 13.500h7M2.500 12L1 13.500 2.500 15M6.500 12L8 13.500 6.500 15" stroke="#1828e0" fill="none" /></svg></button>
        <button aria-label="Zoom out"><svg viewBox="0 0 16 16" width="16" height="16"><circle cx="7" cy="6" r="4" fill="#e8f2f8" stroke="#333" /><path d="M10 9l4 5" stroke="#111" stroke-width="2" /><path d="M5 6h4" stroke="#1828e0" stroke-width="1.500" /></svg></button>
        <button aria-label="Zoom in"><svg viewBox="0 0 16 16" width="16" height="16"><circle cx="7" cy="6" r="4" fill="#e8f2f8" stroke="#333" /><path d="M10 9l4 5" stroke="#111" stroke-width="2" /><path d="M5 6h4M7 4v4" stroke="#1828e0" stroke-width="1.500" /></svg></button>
        <button aria-label="Show axis"><svg viewBox="0 0 16 16" width="16" height="16"><path d="M1 5h14" stroke="#eee" stroke-width="4" /><path d="M2 4h13" stroke="#333" stroke-width="1.500" stroke-dasharray="2 1" /><path d="M8 7v4M5.500 10L8 13.500 10.500 10z" stroke="#2474d8" fill="#2474d8" /></svg></button>
      </div>
    </footer>
  </main>
</template>

<style>
body { background: #fff; }
</style>

<style scoped>
* { box-sizing: border-box; }
.app { overflow-x: hidden; font-family: "Liberation Sans", Arial, sans-serif; font-size: 8px; color: #16222a; background: #fff; }
button { font: inherit; color: inherit; background: none; border: 0; padding: 0; margin: 0; display: flex; align-items: center; justify-content: center; }
svg { display: block; flex: none; }
.top { display: flex; height: 20px; align-items: stretch; background: linear-gradient(#b8d3df, #9dbcca); border-top: 1px solid #60757f; border-bottom: 1px solid #6f868f; }
.brand { display: flex; width: 73px; align-items: center; padding-left: 2px; background: linear-gradient(#4b575c, #252c30); }
.brand-text { display: flex; flex-direction: column; line-height: 8px; color: #e4eaec; }
.brand-text b { font-family: "DejaVu Sans", sans-serif; font-size: 7px; color: #8ee020; }
.brand-text span { font-family: "DejaVu Sans", sans-serif; font-size: 7px; }
.menus { display: flex; gap: 9px; padding: 0 6px 0 4px; }
.link-btn { width: 13px; border-left: 1px solid #71878f; border-right: 1px solid #71878f; }
.search { display: flex; width: 149px; align-items: center; background: #fff; border-right: 1px solid #71878f; padding: 0 2px; }
.search input { flex: 1; min-width: 0; border: 0; outline: 0; padding: 0; font: italic 9px "Liberation Sans", sans-serif; background: none; }
.search input::placeholder { color: #999; opacity: 1; }
.top-right { display: flex; margin-left: auto; padding-right: 3px; }
.top-right button { min-width: 12px; }
.top-right .draw-btn { width: 18px; background: #8ba5b0; border: 1px solid #6d858f; }
.top-right .draw-btn + button { width: 19px; }
.ruled { gap: 3px; padding: 0 4px; border-right: 1px solid #748b94; }
.ruled:nth-child(3) { border-left: 1px solid #748b94; }
.ruled:nth-child(5) { padding: 0 3px; }
.stack { width: 8px; height: 12px; border: 1px solid #2d7d3e; background: repeating-linear-gradient(#5ccf6b 0 3px, #2d9d40 3px 4px); }
.square { width: 8px; height: 8px; border: 1px solid #36a04a; background: #8ce898; }
.toolbar { display: flex; height: 23px; padding: 0 222px 0 2px; background: #9bb9c6; }
.toolbar button { flex: 1; min-width: 0; overflow: visible; }
.toolbar .pressed { background: #8d9ca3; border: 1px solid #74868e; border-radius: 2px; margin: 1px 0; }
.title { display: flex; height: 18px; align-items: center; background: linear-gradient(#a9d0fc, #8cb6ea); border-top: 1px solid #6b8291; }
.cell { height: 17px; border-right: 1px solid #6f92bd; }
.candle-cell { width: 20px; }
.check-cell { width: 13px; }
.pick { position: relative; display: flex; align-items: center; }
.pick::after { content: ""; position: absolute; right: 4px; top: 8px; border: 2px solid transparent; border-top: 3px solid #111; pointer-events: none; }
.pick select { appearance: none; width: 100%; height: 17px; border: 0; background: none; padding: 0 0 0 3px; font: inherit; color: #111c2a; }
.dax, .hour { font-weight: 700; }
.dax { width: 34px; }
.hour { width: 41px; }
.units { width: 58px; }
.info { width: 9px; height: 10px; margin: 0 5px; border: 1px solid #9a9a90; background: #f2f0e4; font-weight: 700; font-size: 7px; }
.quote { color: #b01030; }
.clock { margin-left: 4px; }
.live { width: 6px; height: 6px; border-radius: 50%; background: #3c9c10; margin: 0 4px; }
.title-right { display: flex; align-items: center; margin-left: auto; gap: 2px; padding-right: 4px; }
.title-right button:first-child { margin-right: 4px; }
.workspace { display: grid; grid-template-columns: 982fr 42fr; }
.panel, .prices { width: 100%; height: auto; }
.plots { min-width: 0; }
.tick { font-size: 8px; fill: #2b3338; }
.mid { text-anchor: middle; }
.bold { font-size: 9px; font-weight: 700; fill: #152025; }
.red { fill: #e01c30; }
.big { font-size: 11px; font-weight: 700; fill: #f01828; }
.day { font-size: 9px; font-weight: 700; text-anchor: middle; fill: #111; }
.level { font-size: 9px; font-weight: 700; text-anchor: middle; }
.level-sm { font-size: 8px; font-weight: 700; text-anchor: middle; }
.max { font: italic 700 7px "Liberation Sans", sans-serif; text-anchor: middle; fill: #222; }
.note { font-size: 11px; font-weight: 700; text-anchor: middle; fill: #111; }
.note.small { font-size: 10px; }
.bottom { display: flex; height: 19px; align-items: stretch; background: #9bb9c6; border-top: 1px solid #a9bfc8; border-bottom: 2px solid #2d3b42; }
.b-draw { width: 26px; }
.drop { width: 9px; border-left: 1px solid #71878f; }
.drop::after { content: ""; border: 2px solid transparent; border-top: 3px solid #111; margin-top: 3px; }
.b-chart { width: 23px; background: #e8eeee; }
.drop.light { width: 11px; background: #f0f4f4; }
.share { gap: 3px; width: 40px; background: #2a8fd8; color: #fff; }
.b-icon { width: 19px; }
.fold { width: 13px; font-size: 12px; color: #38505c; }
.scroll { display: flex; flex: 1; min-width: 0; border: 1px solid #71878f; border-width: 0 1px; }
.scroll button { width: 11px; background: #a9c7d3; }
.left, .right { border: 2px solid transparent; }
.left { border-right: 3px solid #111; border-left: 0; }
.right { border-left: 3px solid #111; border-right: 0; }
.track { display: flex; flex: 1; justify-content: flex-end; margin: 1px 0; border: 1px solid #748c96; background: #9ab8c4; }
.thumb { width: 15px; background: #aad0e0; border-left: 1px solid #748c96; }
.zooms { display: flex; align-items: center; gap: 3px; padding: 0 2px 0 4px; }
</style>
